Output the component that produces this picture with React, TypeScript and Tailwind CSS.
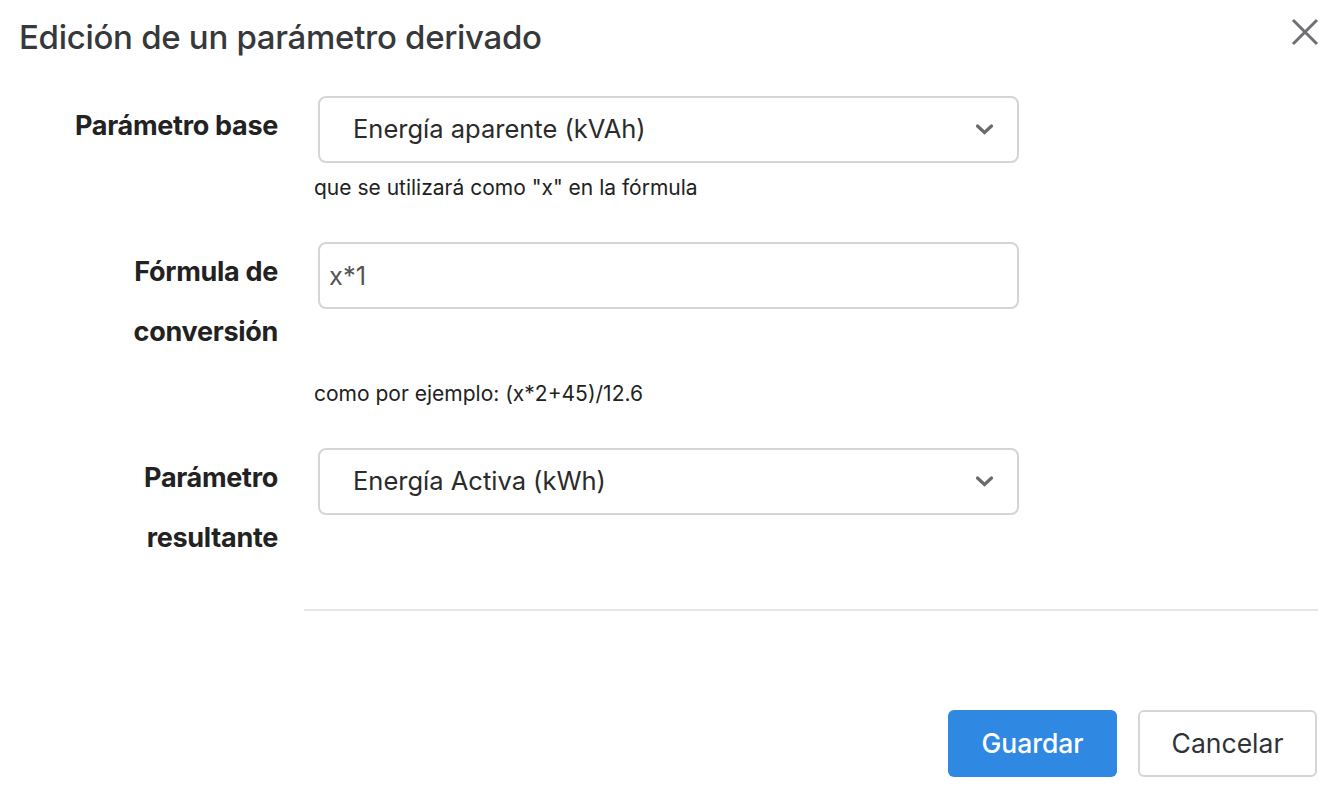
import { useState } from "react";

const font = { fontFamily: "Inter, 'Noto Sans', sans-serif" };

function Chevron() {
  return (
    <svg width="17" height="11" viewBox="0 0 17 11" className="text-[#6b6b6b]">
      <path d="M1.5 2 L8.5 8.5 L15.5 2" fill="none" stroke="currentColor" strokeWidth="3.2" strokeLinecap="round" />
    </svg>
  );
}

function SelectBox({ value }: { value: string }) {
  return (
    <div className="flex h-[67px] w-[701px] items-center justify-between rounded-[8px] border-2 border-[#d3d5d8] bg-white pl-[33px] pr-[24px]">
      <span className="text-[25.5px] text-[#2b2b2b]">{value}</span>
      <Chevron />
    </div>
  );
}

export default function App() {
  const [formula, setFormula] = useState("x*1");

  return (
    <div className="min-h-[796px] w-[1336px] bg-white" style={font}>
      <div className="flex items-start justify-between pl-[19px] pr-[16px] pt-[14px]">
        <h1 className="text-[33px] font-medium leading-[46px] tracking-[-0.3px] text-[#36383b]">
          Edición de un parámetro derivado
        </h1>
        <button className="mt-[3px] p-[1px] text-[#707074]">
          <svg width="28" height="28" viewBox="0 0 28 28">
            <path d="M2 2 L26 26 M26 2 L2 26" stroke="currentColor" strokeWidth="3" fill="none" />
          </svg>
        </button>
      </div>

      <div className="mt-[36px] flex flex-col">
        {/* Parámetro base */}
        <div className="flex gap-[40px]">
          <div className="w-[278px] text-right text-[27px] font-bold leading-[60px] tracking-[-0.3px] text-[#222]">Parámetro base</div>
          <SelectBox value="Energía aparente (kVAh)" />
        </div>
        <div className="ml-[314px] mt-[11px] text-[21px] leading-[28px] text-[#222]">
          que se utilizará como "x" en la fórmula
        </div>

        {/* Fórmula */}
        <div className="mt-[40px] flex gap-[40px]">
          <div className="w-[278px] text-right text-[27px] font-bold leading-[60px] tracking-[-0.3px] text-[#222]">
            Fórmula de
            <br />
            conversión
          </div>
          <input
            value={formula}
            onChange={(e) => setFormula(e.target.value)}
            className="h-[67px] w-[701px] rounded-[8px] border-2 border-[#d3d5d8] bg-white px-[9px] text-[25.5px] text-[#555] outline-none"
          />
        </div>
        <div className="ml-[314px] mt-[18px] text-[21px] leading-[28px] text-[#222]">
          como por ejemplo: (x*2+45)/12.6
        </div>

        {/* Parámetro resultante */}
        <div className="mt-[40px] flex gap-[40px]">
          <div className="w-[278px] text-right text-[27px] font-bold leading-[60px] tracking-[-0.3px] text-[#222]">
            Parámetro
            <br />
            resultante
          </div>
          <SelectBox value="Energía Activa (kWh)" />
        </div>

        <div className="ml-[304px] mr-[18px] mt-[41px] h-[2px] bg-[#e6e6e6]" />

        <div className="mt-[99px] flex justify-end gap-[21px] pr-[19px]">
          <button className="h-[67px] w-[169px] rounded-[6px] bg-[#2f89e3] text-[26.5px] font-medium text-white">
            Guardar
          </button>
          <button className="h-[67px] w-[179px] rounded-[6px] border-2 border-[#d3d5d8] bg-white text-[26.5px] text-[#2f3236]">
            Cancelar
          </button>
        </div>
      </div>
    </div>
  );
}
